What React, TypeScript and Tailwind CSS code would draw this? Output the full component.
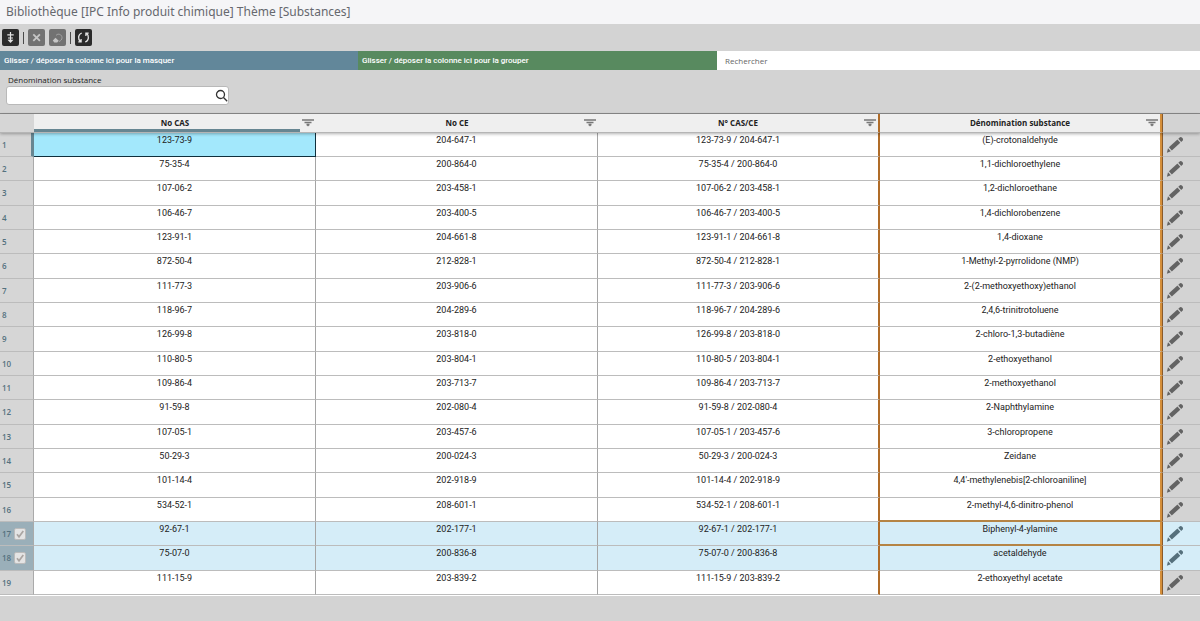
import React from "react";

type Row = { cas: string; ce: string; name: string; checked?: boolean };

const rows: Row[] = [
  { cas: "123-73-9", ce: "204-647-1", name: "(E)-crotonaldehyde" },
  { cas: "75-35-4", ce: "200-864-0", name: "1,1-dichloroethylene" },
  { cas: "107-06-2", ce: "203-458-1", name: "1,2-dichloroethane" },
  { cas: "106-46-7", ce: "203-400-5", name: "1,4-dichlorobenzene" },
  { cas: "123-91-1", ce: "204-661-8", name: "1,4-dioxane" },
  { cas: "872-50-4", ce: "212-828-1", name: "1-Methyl-2-pyrrolidone (NMP)" },
  { cas: "111-77-3", ce: "203-906-6", name: "2-(2-methoxyethoxy)ethanol" },
  { cas: "118-96-7", ce: "204-289-6", name: "2,4,6-trinitrotoluene" },
  { cas: "126-99-8", ce: "203-818-0", name: "2-chloro-1,3-butadiène" },
  { cas: "110-80-5", ce: "203-804-1", name: "2-ethoxyethanol" },
  { cas: "109-86-4", ce: "203-713-7", name: "2-methoxyethanol" },
  { cas: "91-59-8", ce: "202-080-4", name: "2-Naphthylamine" },
  { cas: "107-05-1", ce: "203-457-6", name: "3-chloropropene" },
  { cas: "50-29-3", ce: "200-024-3", name: "Zeidane" },
  { cas: "101-14-4", ce: "202-918-9", name: "4,4'-methylenebis[2-chloroaniline]" },
  { cas: "534-52-1", ce: "208-601-1", name: "2-methyl-4,6-dinitro-phenol" },
  { cas: "92-67-1", ce: "202-177-1", name: "Biphenyl-4-ylamine", checked: true },
  { cas: "75-07-0", ce: "200-836-8", name: "acetaldehyde", checked: true },
  { cas: "111-15-9", ce: "203-839-2", name: "2-ethoxyethyl acetate" },
];

const columns = ["No CAS", "No CE", "N° CAS/CE", "Dénomination substance"];

const cellBase = "px-1 py-px text-center align-top leading-3";
const plainCell = "border-b border-r border-b-[#bcbcbc] border-r-[#a5a5a5]";
const activeCell = "border-b border-r border-[#10303d] bg-[#a3e8fc]";
const beforeNameCell = "border-b border-r-2 border-b-[#bcbcbc] border-r-[#b06c28]";
const nameCell = "border-b border-r-2 border-b-[#bcbcbc] border-r-[#d58f3a]";
const outlinedNameCell = "border-b-2 border-r-2 border-b-[#b58445] border-r-[#d58f3a]";

function FilterIcon() {
  return (
    <svg viewBox="0 0 12 8" className="h-2 w-3" aria-hidden="true">
      <path d="M0 1h12M2.5 3.5h7M4.5 5.5h3" stroke="#777" strokeWidth="1.4" fill="none" />
      <path d="M4.5 6h3L6 7.6z" fill="#777" />
    </svg>
  );
}

function PencilIcon({ tinted }: { tinted?: boolean }) {
  return (
    <svg viewBox="0 0 18 18" className="h-[18px] w-[18px]" fill={tinted ? "#56707c" : "#636363"} aria-hidden="true">
      <path d="M2.9 11.2 11.4 3.6 14.3 6.7 5.8 14.4z" />
      <path d="M12.3 2.8 14 1.3Q15 .7 15.9 1.6L16.8 2.6Q17.4 3.6 16.7 4.4L15.2 5.9z" />
      <path d="M2 12.3 4.8 15.2.9 16.7z" />
    </svg>
  );
}

function ToolButton({ label, muted, children }: { label: string; muted?: boolean; children: React.ReactNode }) {
  return (
    <button
      type="button"
      aria-label={label}
      className={`flex h-[17px] w-[17px] items-center justify-center rounded-[2px] ${muted ? "bg-[#727272] text-[#c6c6c6]" : "bg-[#2b2b2b] text-[#e4e4e4]"}`}
    >
      <svg viewBox="0 0 17 17" className="h-[17px] w-[17px]" fill="none" stroke="currentColor" strokeWidth="1.5" aria-hidden="true">
        {children}
      </svg>
    </button>
  );
}

function Separator() {
  return <span className="h-3 w-px bg-[#4a4a4a]" />;
}

export default function App() {
  return (
    <div className="min-h-screen bg-[#d3d3d3] font-['Open_Sans','Noto_Sans',sans-serif] text-[#222]">
      <header className="flex h-6 items-center bg-[#f5f5f7] px-[6px]">
        <h1 className="font-['Noto_Sans','Open_Sans',sans-serif] text-[12px] leading-4 text-[#66686e]">
          Bibliothèque [IPC Info produit chimique] Thème [Substances]
        </h1>
      </header>

      <div className="flex h-[27px] items-center gap-1 px-[2px]">
        <ToolButton label="Insérer">
          <path d="M8.5 3v9M5.300 5.800h6.400M6 9h5" strokeWidth="1.2" />
          <path d="M5.500 10.800h6L8.500 14z" fill="currentColor" stroke="none" />
        </ToolButton>
        <Separator />
        <ToolButton label="Supprimer" muted>
          <path d="m5.3 5.3 6.6 6.6m0-6.600-6.600 6.600" strokeWidth="1.8" />
        </ToolButton>
        <ToolButton label="Effacer" muted>
          <path d="M7 6.500C9 3.800 13 5.600 13 8.600c0 1.900-1.200 3.300-3 3.900" strokeWidth="1" stroke="#a5a5a5" />
          <path d="M3.800 11.500 6.500 8.800l3.200 2.900-1.500 1.800H5.300z" fill="currentColor" stroke="none" />
        </ToolButton>
        <Separator />
        <ToolButton label="Actualiser">
          <path d="M6.800 4C2.800 5.300 2.800 10.500 5.500 12.700M3.300 12.900h2.800v-3M10.200 13c4-1.300 4-6.500 1.300-8.700M13.700 4.100h-2.800v3" strokeWidth="1.3" />
        </ToolButton>
      </div>

      <div className="grid h-[19px] grid-cols-[358fr_359fr_483fr] text-[8px] leading-[19px]">
        <div className="bg-[#62879a] px-1 font-['Roboto',sans-serif] font-medium text-white">Glisser / déposer la colonne ici pour la masquer</div>
        <div className="bg-[#588a5f] px-1 font-['Roboto',sans-serif] font-medium text-white">Glisser / déposer la colonne ici pour la grouper</div>
        <input
          type="text"
          aria-label="Rechercher"
          placeholder="Rechercher"
          className="min-w-0 bg-white px-2 text-[8px] outline-none placeholder:text-[#666]"
        />
      </div>

      <div className="px-[6px] pb-2 pt-1">
        <label htmlFor="substance" className="block px-[2px] text-[8px] leading-3">
          Dénomination substance
        </label>
        <div className="flex h-[19px] w-[223px] items-center rounded-[3px] border border-[#b9b9b9] bg-white">
          <input id="substance" type="text" className="h-full min-w-0 flex-1 bg-transparent px-1 text-[9px] outline-none" />
          <button type="button" aria-label="Chercher" className="flex h-full items-center">
            <svg viewBox="0 0 13 13" className="h-[13px] w-[13px]" fill="none" stroke="#333" strokeWidth="1.3" aria-hidden="true">
              <circle cx="5.5" cy="5.5" r="4" />
              <path d="m8.500 8.500 3.700 3.700" />
            </svg>
          </button>
        </div>
      </div>

      <table className="w-full table-fixed border-separate border-spacing-0 border-b border-t border-b-white border-t-[#8a8a8a]">
        <colgroup>
          <col className="w-[34px]" />
          <col />
          <col />
          <col />
          <col />
          <col className="w-[38px]" />
        </colgroup>
        <thead className="relative text-[8px] shadow-[0_1px_3px_rgba(0,0,0,0.3)]">
          <tr className="h-[19px] bg-[#efefef]">
            <th className="border-b border-[#b5b5b5] bg-[#d6d6d6] p-0" aria-label="Ligne" />
            {columns.map((c, i) => (
              <th
                key={c}
                scope="col"
                className={`border-b border-b-[#b5b5b5] p-0 font-bold ${i === 2 ? "border-r-2 border-r-[#b06c28]" : ""} ${i === 3 ? "border-r-2 border-r-[#d58f3a]" : ""}`}
              >
                <div className="grid h-[15px] grid-cols-[14px_1fr_14px] items-end">
                  <span />
                  <span className="leading-3">{c}</span>
                  <button type="button" aria-label={`Filtrer ${c}`} className="flex h-3 items-center">
                    <FilterIcon />
                  </button>
                </div>
                <div className={`mr-4 h-[3px] ${i === 0 ? "bg-[#678692]" : ""}`} />
              </th>
            ))}
            <th className="border-b border-l border-b-[#b5b5b5] border-l-[#8a5a2a] bg-[#d3d3d3] p-0" aria-label="Modifier" />
          </tr>
        </thead>
        <tbody className="font-['Roboto','Open_Sans',sans-serif] text-[9px] [&>tr:nth-child(3n)]:h-[25px] [&>tr]:h-6">
          {rows.map((r, i) => (
            <tr key={r.cas} className={r.checked ? "bg-[#d5edf8]" : "bg-white"}>
              <th
                scope="row"
                className={`border-b border-b-[#bcbcbc] p-0 pl-[2px] text-left font-['Open_Sans',sans-serif] text-[8px] font-semibold text-[#54717e] ${r.checked ? "bg-[#9aafb9]" : "bg-[#d6d6d6]"} ${i === 0 ? "border-r-[3px] border-r-[#678692]" : "border-r border-r-[#aaa]"}`}
              >
                <div className="flex items-center gap-[3px] leading-3">
                  <span>{i + 1}</span>
                  {r.checked && (
                    <span className="grid">
                      <input
                        type="checkbox"
                        defaultChecked
                        aria-label={`Sélectionner ${r.name}`}
                        className="col-start-1 row-start-1 h-3 w-3 appearance-none rounded-[2px] border border-[#bbb] bg-[#e4e4e4]"
                      />
                      <svg viewBox="0 0 12 12" className="pointer-events-none col-start-1 row-start-1 h-3 w-3" fill="none" stroke="#aaa5a2" strokeWidth="1.7" aria-hidden="true">
                        <path d="m3 6.300 2 2.500L9.300 3" />
                      </svg>
                    </span>
                  )}
                </div>
              </th>
              <td className={`${cellBase} ${i === 0 ? activeCell : plainCell}`}>{r.cas}</td>
              <td className={`${cellBase} ${plainCell}`}>{r.ce}</td>
              <td className={`${cellBase} ${beforeNameCell}`}>
                {r.cas} / {r.ce}
              </td>
              <td className={`${cellBase} ${i === 15 || i === 16 ? outlinedNameCell : nameCell}`}>{r.name}</td>
              <td className={`border-b border-l border-b-[#bcbcbc] border-l-[#8a5a2a] p-0 pl-[3px] ${r.checked ? "" : "bg-[#d3d3d3]"}`}>
                <button type="button" aria-label={`Modifier ${r.name}`} className="flex items-center">
                  <PencilIcon tinted={r.checked} />
                </button>
              </td>
            </tr>
          ))}
        </tbody>
      </table>
    </div>
  );
}
